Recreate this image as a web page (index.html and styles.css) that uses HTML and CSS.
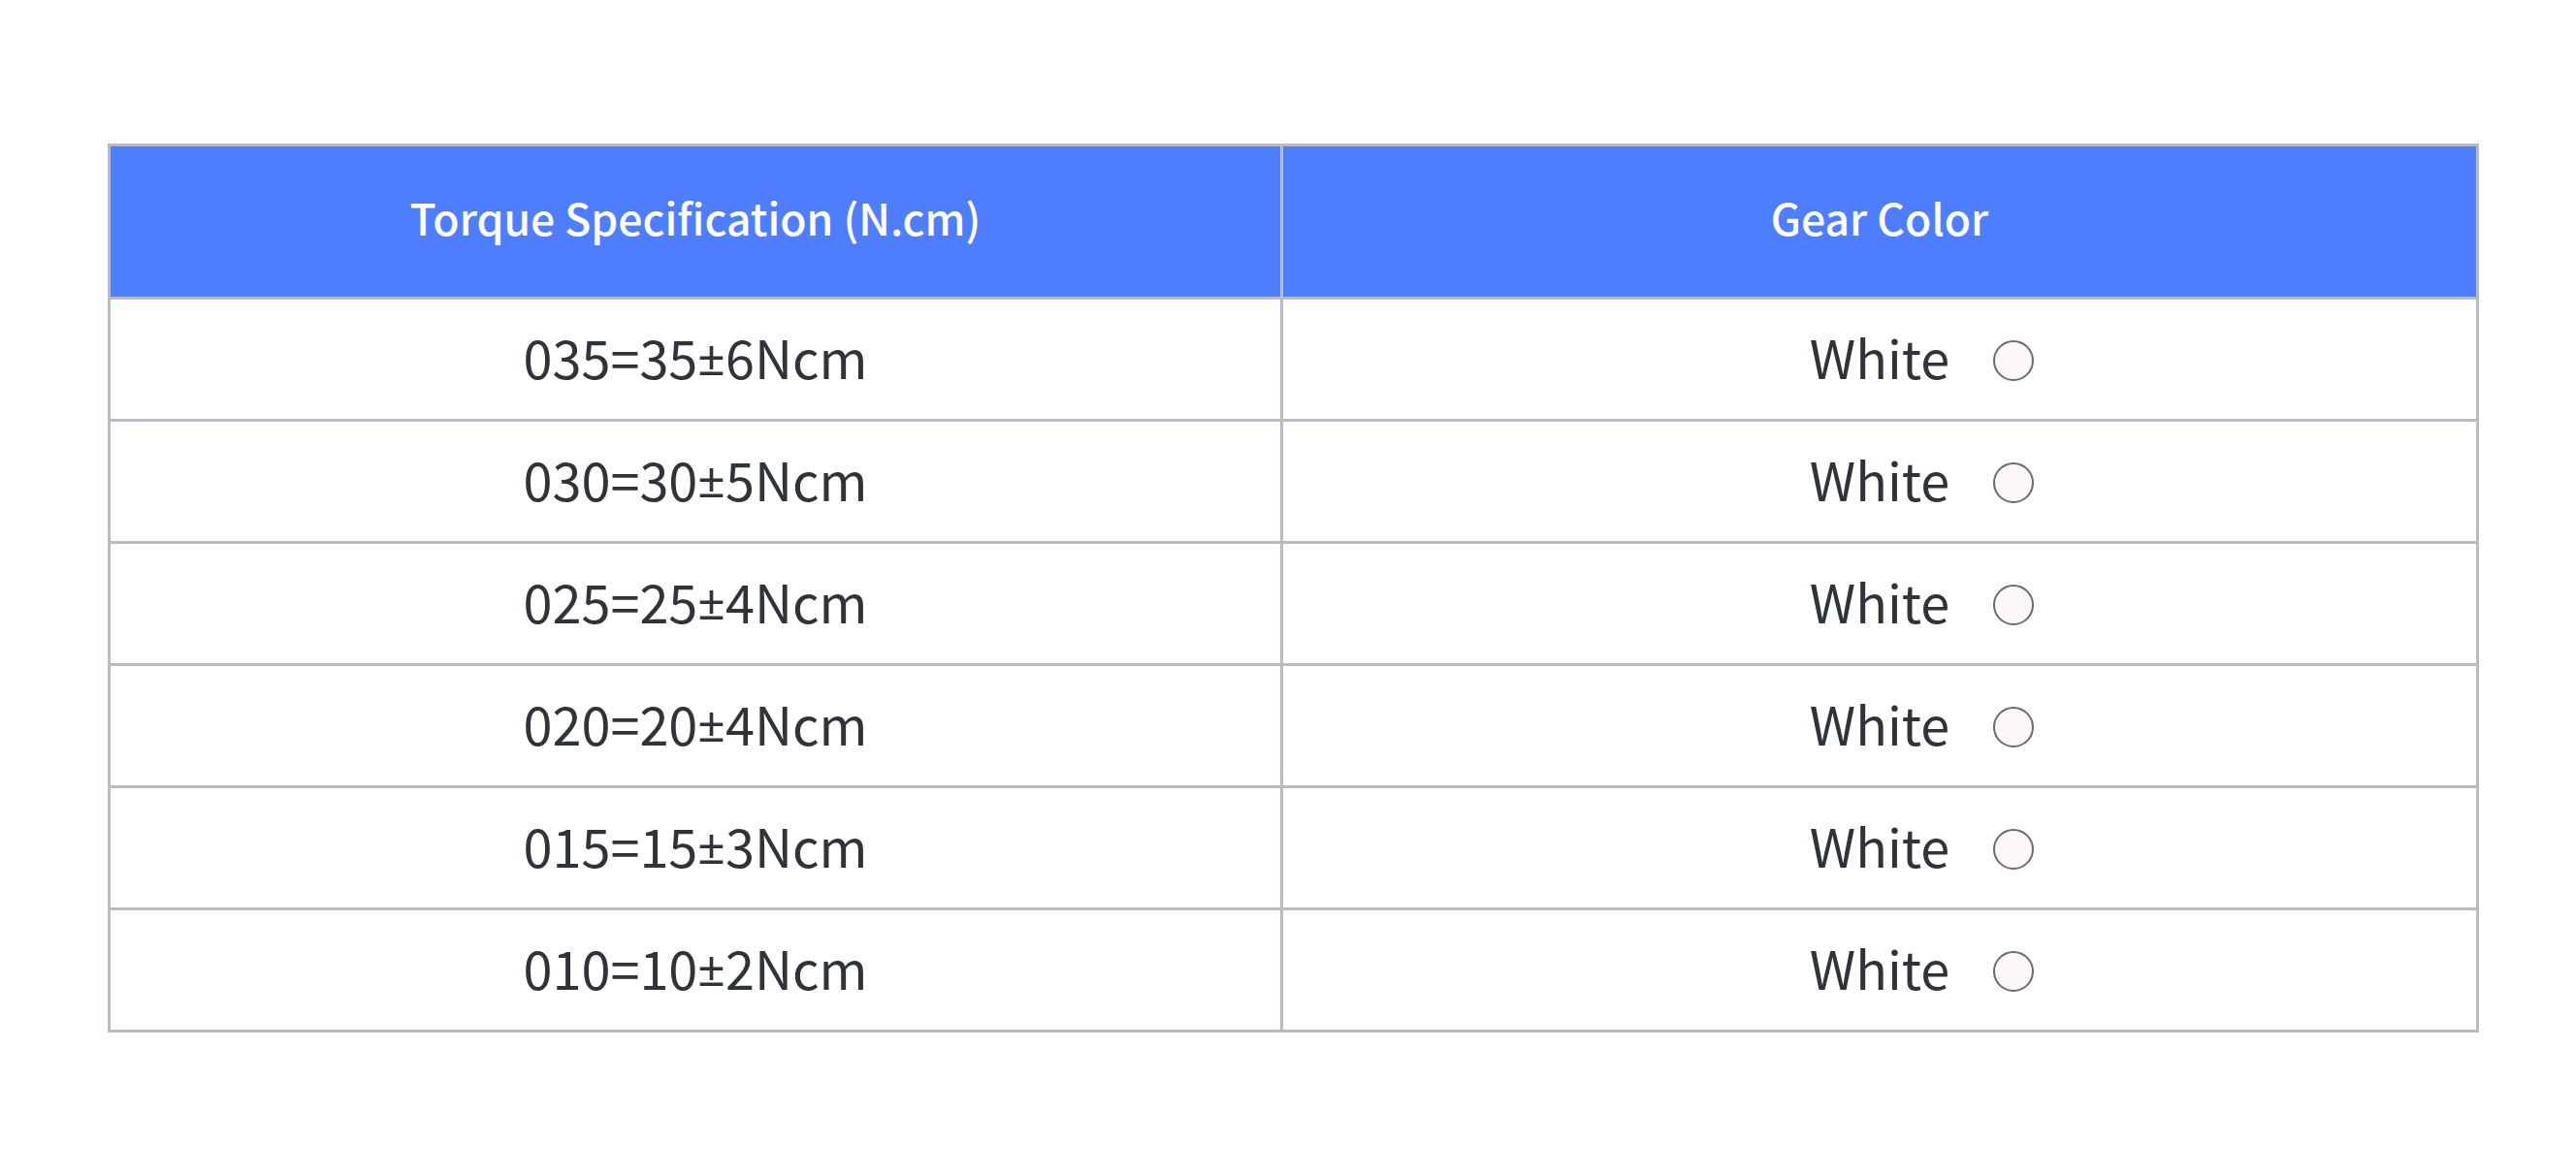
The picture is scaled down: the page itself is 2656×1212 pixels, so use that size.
FILE: index.html
```html
<!DOCTYPE html>
<html lang="en">
<head>
<meta charset="utf-8">
<title>Torque Specification</title>
<link rel="stylesheet" href="styles.css">
</head>
<body>
<main class="page">
  <div class="spec-table" role="table">
    <div class="row head" role="row">
      <div class="cell hcell" role="columnheader">Torque Specification (N.cm)</div>
      <div class="cell hcell" role="columnheader">Gear Color</div>
    </div>
    <div class="row" role="row">
      <div class="cell" role="cell">035=35<span class="pm">±</span>6Ncm</div>
      <div class="cell color" role="cell"><span class="name">White</span><span class="swatch"></span></div>
    </div>
    <div class="row" role="row">
      <div class="cell" role="cell">030=30<span class="pm">±</span>5Ncm</div>
      <div class="cell color" role="cell"><span class="name">White</span><span class="swatch"></span></div>
    </div>
    <div class="row" role="row">
      <div class="cell" role="cell">025=25<span class="pm">±</span>4Ncm</div>
      <div class="cell color" role="cell"><span class="name">White</span><span class="swatch"></span></div>
    </div>
    <div class="row" role="row">
      <div class="cell" role="cell">020=20<span class="pm">±</span>4Ncm</div>
      <div class="cell color" role="cell"><span class="name">White</span><span class="swatch"></span></div>
    </div>
    <div class="row" role="row">
      <div class="cell" role="cell">015=15<span class="pm">±</span>3Ncm</div>
      <div class="cell color" role="cell"><span class="name">White</span><span class="swatch"></span></div>
    </div>
    <div class="row" role="row">
      <div class="cell" role="cell">010=10<span class="pm">±</span>2Ncm</div>
      <div class="cell color" role="cell"><span class="name">White</span><span class="swatch"></span></div>
    </div>
  </div>
</main>
</body>
</html>
```

FILE: styles.css
```css
* { box-sizing: border-box; }

html, body {
  margin: 0;
  padding: 0;
  background: #ffffff;
}

.page {
  padding: 148px 0 0 111px;
  font-family: "Noto Sans CJK SC", "Noto Sans", sans-serif;
}

.spec-table {
  width: 2445px;
  border-top: 3px solid #b6bbc4;
  border-left: 3px solid #b6bbc4;
}

.row {
  display: grid;
  grid-template-columns: 1209px 1233px;
  height: 126px;
}

.row.head {
  height: 158px;
  background: #4e7eff;
}

.cell {
  border-right: 3px solid #b6bbc4;
  border-bottom: 3px solid #b6bbc4;
  display: flex;
  align-items: center;
  justify-content: center;
  font-size: 54px;
  line-height: 1;
  color: #2f333a;
  padding-bottom: 6px;
  white-space: pre;
}

.pm {
  font-family: "Noto Sans", "Open Sans", sans-serif;
  font-size: 50px;
}

.hcell {
  font-size: 44.5px;
  font-weight: 500;
  color: #ffffff;
  padding-bottom: 8px;
}

.color {
  display: grid;
  grid-template-columns: 1fr auto 1fr;
  align-items: center;
}

.color .name {
  grid-column: 2;
}

.swatch {
  grid-column: 3;
  justify-self: start;
  width: 42px;
  height: 42px;
  margin-left: 45px;
  margin-top: 8px;
  border: 2px solid #6b6b6b;
  border-radius: 50%;
  background: #fdf7f7;
}
```
